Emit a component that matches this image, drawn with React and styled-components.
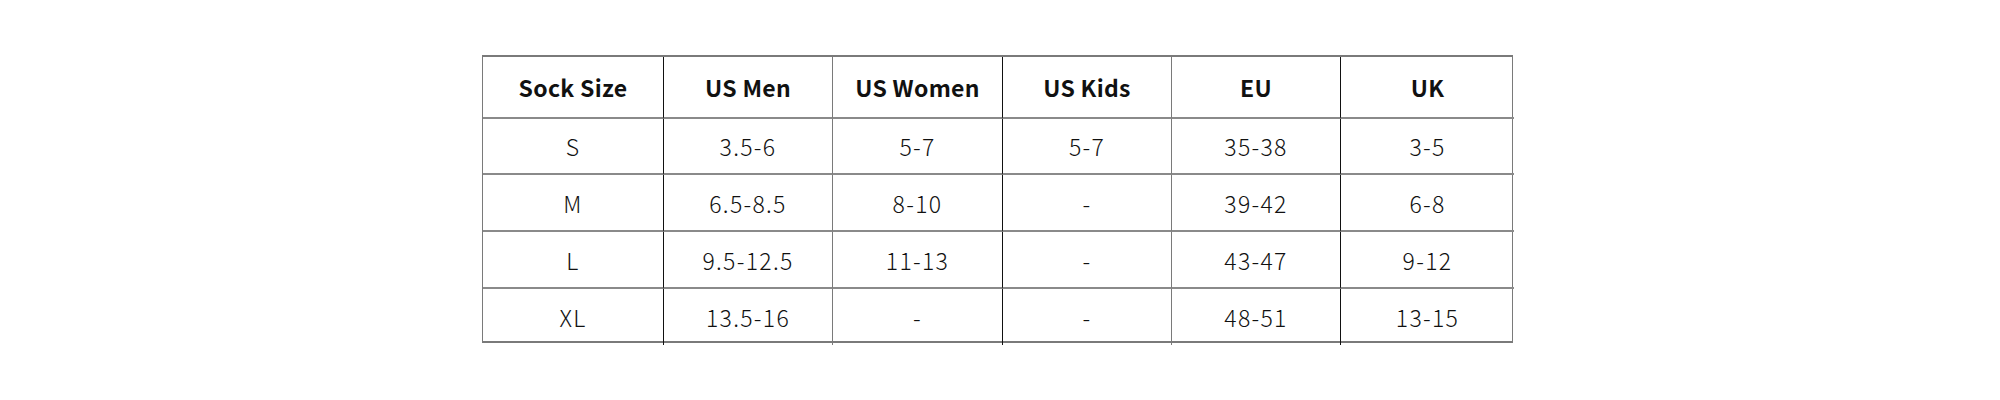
import React from 'react'
import styled, { createGlobalStyle } from 'styled-components'

const Global = createGlobalStyle`
  html, body { margin: 0; padding: 0; background: #fff; }
  body { width: 2000px; height: 400px; }
`

const Page = styled.div`
  width: 2000px;
  height: 400px;
  padding: 55px 0 0 482px;
  box-sizing: border-box;
  display: flex;
`

const Grid = styled.div`
  display: grid;
  grid-template-columns: 181px 169px 170px 169px 169px 173px;
  grid-template-rows: 62px 56px 57px 57px 56px;
  border: 1px solid #7a7a7a;
  border-top-width: 2px;
  border-bottom-width: 2px;
  box-sizing: border-box;
  width: 1031px;
  height: 288px;
`

const Cell = styled.div`
  display: flex;
  align-items: center;
  justify-content: center;
  box-sizing: border-box;
  border-right: ${p => (p.$last ? 'none' : p.$dark ? '1px solid #111' : '1px solid #7a7a7a')};
  border-bottom: ${p => (p.$bottom ? 'none' : '2px solid #8a8a8a')};
  font-family: "Noto Sans CJK SC", "Noto Sans", sans-serif;
  font-weight: ${p => (p.$head ? 700 : 300)};
  font-size: 23px;
  letter-spacing: ${p => (p.$head ? '0.3px' : '1.3px')};
  color: #111;
`

const head = ['Sock Size', 'US Men', 'US Women', 'US Kids', 'EU', 'UK']
const rows = [
  ['S', '3.5-6', '5-7', '5-7', '35-38', '3-5'],
  ['M', '6.5-8.5', '8-10', '-', '39-42', '6-8'],
  ['L', '9.5-12.5', '11-13', '-', '43-47', '9-12'],
  ['XL', '13.5-16', '-', '-', '48-51', '13-15'],
]

export default function App() {
  const all = [head, ...rows]
  return (
    <>
      <Global />
      <Page>
        <Grid>
          {all.map((r, ri) =>
            r.map((c, ci) => (
              <Cell
                key={ri + '-' + ci}
                $head={ri === 0}
                $dark={ci % 2 === 0}
                $last={ci === 5}
                $bottom={ri === all.length - 1}
              >
                {c}
              </Cell>
            ))
          )}
        </Grid>
      </Page>
    </>
  )
}
